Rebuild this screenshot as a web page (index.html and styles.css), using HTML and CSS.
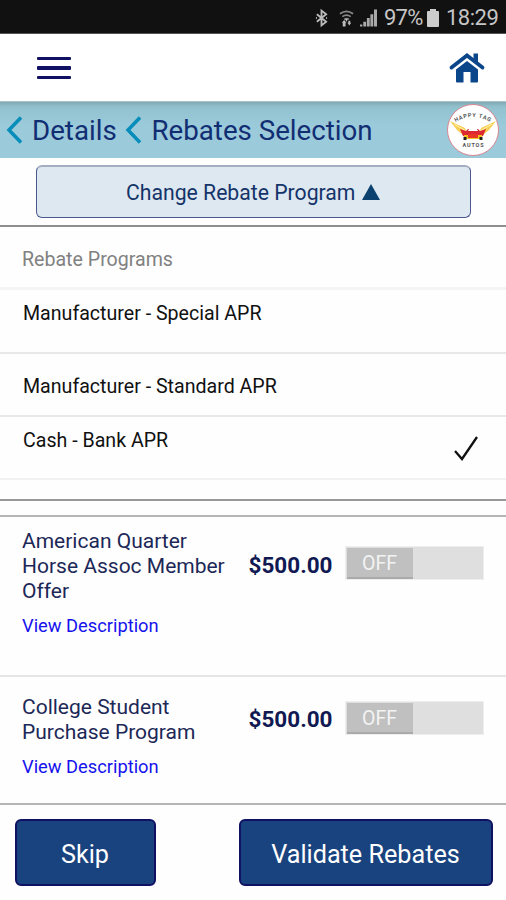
FILE: index.html
```html
<!DOCTYPE html>
<html lang="en">
<head>
<meta charset="utf-8">
<title>Rebates Selection</title>
<link rel="stylesheet" href="styles.css">
</head>
<body>
<div class="status">
  <svg class="bt" viewBox="0 0 14 18"><path d="M2 5l10 8-5 4V1l5 4-10 8M1 9h1m10 0h1"/></svg>
  <svg class="wifi" viewBox="0 0 16 18"><path class="arc" d="M1 4.500q7-5 14 0M3.500 7.500q4.500-3 9 0M5.500 10.500q2.500-1.800 5 0"/><path class="fill" d="M6.500 10h3L8 13zM3 14l2.500-3 2.500 3H7v4H4v-4zM9 14h1v-2h2v2h1l-2 3z"/></svg>
  <svg class="signal" viewBox="0 0 18 18"><path d="M0 18v-2h2.500v2zM3.500 18v-5h3v5zM7.300 18v-9h3v9zM11 18V5h3v13zM14.800 18V0H18v18z"/></svg>
  <span class="percent">97%</span>
  <svg class="battery" viewBox="0 0 12 18"><path d="M3 0h6v2h2q1 0 1 1v14q0 1-1 1H1q-1 0-1-1V3q0-1 1-1h2z"/></svg>
  <span class="clock">18:29</span>
</div>
<header class="topbar">
  <div class="menu"><i></i><i></i><i></i></div>
  <svg class="home" viewBox="0 0 36 32"><path d="M2.500 15.500L18 3.500 33.500 15.500" fill="none" stroke="#0b468b" stroke-width="3.800" stroke-linecap="round"/><path d="M24.500 1.500h4.500v9l-4.500-4zM7 17.500L18 9 29 17.500v12q0 1-1 1h-6.500V20h-7v10.500H8q-1 0-1-1z" fill="#0b468b"/></svg>
</header>
<nav class="crumbs">
  <svg class="chev" viewBox="0 0 18 28"><path d="M16 1.500L4 14l12 12.500"/></svg>
  <span class="details">Details</span>
  <svg class="chev second" viewBox="0 0 18 28"><path d="M16 1.500L4 14l12 12.500"/></svg>
  <span class="current">Rebates Selection</span>
  <svg class="logo" viewBox="0 0 52 52">
    <defs><path id="arc" d="M7 19Q26 7 45 19"/></defs>
    <circle cx="26" cy="26" r="25.500" fill="#fff" stroke="#d98791"/>
    <text class="brand"><textPath href="#arc" startOffset="50%">HAPPY TAG</textPath></text>
    <path d="M3 17l15 7 2 5-4 2-6-5zM49 17l-15 7-2 5 4 2 6-5z" fill="#f8cf55"/>
    <path d="M7 20l12 7M45 20l-12 7" stroke="#fff3b0" fill="none"/>
    <path d="M13 25l6 2 2-2h10l2 2 6-2-3 7q-9 3-20 0z" fill="#dc2830"/>
    <path d="M22 25h8l1 2h-10z" fill="#fff"/><path d="M17 31h18v4H17z" fill="#f5c31d"/>
    <path d="M21 30h10v4H21z" fill="#e83524"/><path d="M16.500 33h3v3h-3zM32.500 33h3v3h-3z" fill="#222"/>
    <text class="brand" x="26.500" y="43">AUTOS</text>
  </svg>
</nav>
<section class="change"><button><span>Change Rebate Program</span><svg viewBox="0 0 18 16"><path d="M9 0l9 16H0z"/></svg></button></section>
<main>
  <section class="programs">
    <h2><span>Rebate Programs</span></h2>
    <div class="program first"><span>Manufacturer - Special APR</span></div>
    <div class="program middle"><span>Manufacturer - Standard APR</span></div>
    <div class="program last"><span>Cash - Bank APR</span><svg viewBox="0 0 24 26"><path d="M1 15l7 8L23 1"/></svg></div>
  </section>
  <section class="offers">
    <article class="offer american">
      <div class="info"><h3>American Quarter<br>Horse Assoc Member<br>Offer</h3><a>View Description</a></div>
      <strong>$500.00</strong><div class="toggle"><span>OFF</span></div>
    </article>
    <article class="offer college">
      <div class="info"><h3>College Student<br>Purchase Program</h3><a>View Description</a></div>
      <strong>$500.00</strong><div class="toggle"><span>OFF</span></div>
    </article>
  </section>
</main>
<footer><button class="skip">Skip</button><button class="validate">Validate Rebates</button></footer>
</body>
</html>
```
FILE: styles.css
```css
* { box-sizing: border-box; }
body { margin: 0; width: 506px; height: 900px; overflow: hidden; background: #fefefe; font-family: Roboto, sans-serif; color: #111; }
svg { display: block; flex: none; overflow: visible; }
button { font: inherit; padding: 0; }
span, strong { white-space: nowrap; }
.status { height: 34px; background: #111; border-bottom: 1px solid #555; display: flex; align-items: center; padding: 2px 0 0 315px; color: #c5c5c5; font-size: 22px; }
.bt { width: 13px; height: 18px; fill: none; stroke: #bbb; stroke-width: 2; }
.wifi { width: 15px; height: 18px; margin-left: 11px; }
.arc { fill: none; stroke: #888; stroke-width: 1.8; }
.fill { fill: #bbb; }
.signal { width: 17px; height: 18px; margin-left: 6px; fill: #aaa; }
.percent { width: 40px; margin-left: 7px; letter-spacing: -.8px; }
.battery { width: 12px; height: 18px; margin-left: 3px; fill: #ccc; }
.clock { margin-left: 7px; letter-spacing: -.5px; }
.topbar { height: 67px; background: #fff; display: flex; align-items: center; justify-content: space-between; padding: 0 21px 0 37px; }
.menu { width: 34px; display: grid; gap: 6px; margin-top: 1px; }
.menu i { display: block; height: 3.5px; border-radius: 1px; background: #111164; }
.home { width: 36px; height: 32px; }
.crumbs { height: 57px; background: linear-gradient(#7fa9b4 0, #92c1ce 5px, #9bcadb 24px, #9bcadb 100%); border-top: 1px solid #afc0c4; display: flex; align-items: center; padding-left: 5px; color: #112e73; font-size: 27.7px; }
.chev { width: 18px; height: 28px; fill: none; stroke: #078db9; stroke-width: 3.5; }
.details { width: 85px; margin-left: 9px; }
.chev.second { margin-left: 7px; }
.current { width: 222px; margin-left: 9.5px; }
.logo { width: 52px; height: 52px; margin-left: auto; margin-right: 7px; }
.brand { font: 700 5.5px Roboto, sans-serif; text-anchor: middle; letter-spacing: .8px; fill: #555; }
.change { height: 69px; padding: 7px 35px 0 36px; border-bottom: 2px solid #8e8e8e; }
.change button { width: 435px; height: 53px; background: #dee8f1; border: 1px solid #4b588d; border-top: 2px solid #a5adc1; border-radius: 6px; color: #143469; font-size: 21.2px; display: flex; align-items: center; padding-left: 89px; }
.change button svg { width: 18px; height: 16px; margin-left: 7px; fill: #0b416f; }
.programs { height: 274px; border-bottom: 2px solid #999; }
.programs h2 { height: 63px; margin: 0; padding: 21px 22px; border-bottom: 3px solid #f4f4f4; color: #818181; font-size: 19.6px; font-weight: 400; line-height: 24px; }
.program { height: 63px; padding: 12px 28px 0 23px; border-bottom: 2px solid #e8e8e8; display: flex; justify-content: space-between; font-size: 19.6px; line-height: 24px; }
.program.first { height: 64px; }
.program.middle { height: 63px; padding-top: 21px; }
.program.last { border-color: #f2f2f2; }
.program svg { width: 24px; height: 26px; margin-top: 7px; fill: none; stroke: #111; stroke-width: 2.3; }
.offers { margin-top: 14px; border-top: 2px solid #b5b5b5; }
.offer { display: grid; grid-template-columns: 226.5px 96.5px 138px; align-items: start; padding-left: 22px; border-bottom: 2px solid #e5e5e5; }
.american { height: 160px; padding-top: 12px; }
.college { height: 128px; padding-top: 18px; border-color: #b5b5b5; }
.offer h3 { margin: 0; color: #1c2857; font-size: 21px; line-height: 25px; font-weight: 400; }
.offer a { display: block; color: #1512ed; font-size: 18.3px; line-height: 22px; margin-top: 11px; }
.offer strong { color: #111953; font-size: 22.5px; line-height: 26px; margin-top: 23px; }
.toggle { width: 139px; height: 34px; margin: 17px 0 0 -.5px; padding: 1px; background: #dfdfdf; border: 1px solid #eee; }
.toggle span { display: block; width: 66px; height: 31px; background: #c0c0c0; border-bottom: 2px solid #aaa; color: #f3f3f3; font-size: 19.5px; line-height: 32px; text-align: center; }
.college strong { margin-top: 11px; }
.college .toggle { margin-top: 6px; }
footer { height: 94px; padding: 14px 13.5px 0 14.5px; display: flex; justify-content: space-between; }
footer button { height: 67px; background: #19437e; border: 2px solid #101163; border-radius: 6px; color: #fff; font-size: 25.2px; padding-top: 3px; }
.skip { width: 141px; }
.validate { width: 254px; }
```
